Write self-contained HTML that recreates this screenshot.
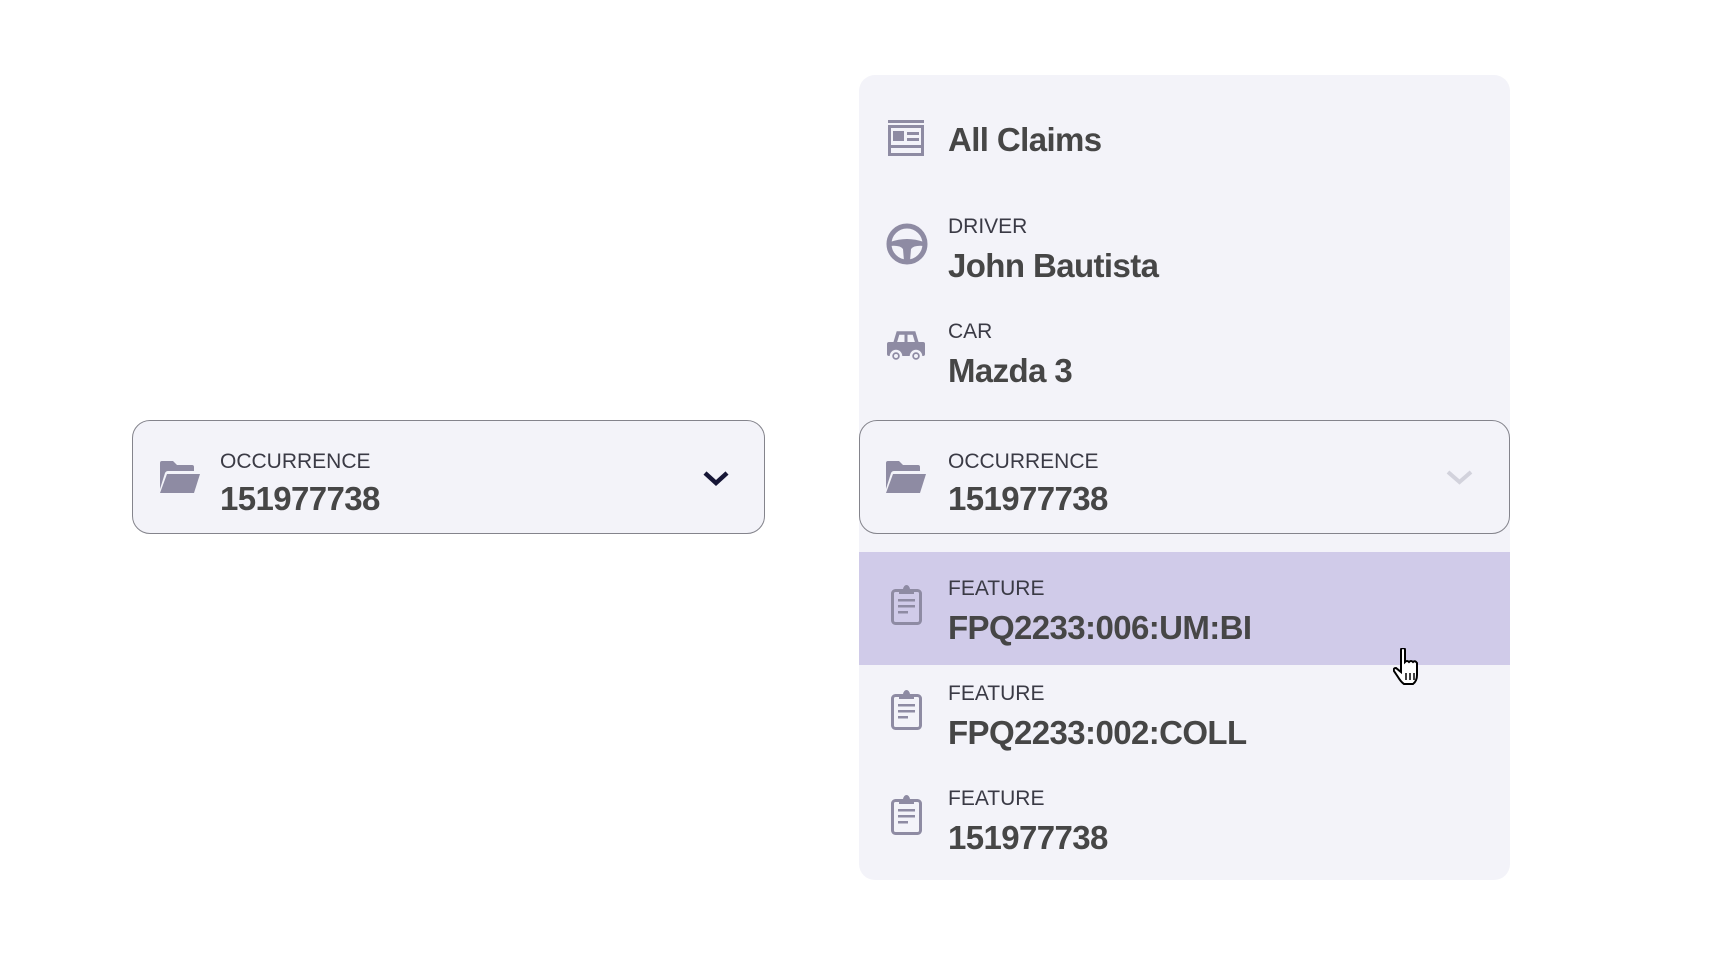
<!DOCTYPE html>
<html><head><meta charset="utf-8"><style>
*{margin:0;padding:0;box-sizing:border-box}
body{width:1730px;height:962px;background:#fff;position:relative;overflow:hidden;font-family:"Liberation Sans",sans-serif;color:#444}
.a{position:absolute}
.lbl{position:absolute;font-size:21px;line-height:21px;color:#3a3a45;font-weight:400}
.val{position:absolute;font-size:33px;line-height:33px;font-weight:700;color:#464646;letter-spacing:-0.6px}
.box{position:absolute;border:1.5px solid #84848c;border-radius:18px;background:#f3f3f9}
</style></head><body>

<div class="box" style="left:132px;top:420px;width:633px;height:114px"></div>
<svg class="a" style="left:160px;top:461px" width="40" height="32" viewBox="0 0 40 32"><path d="M0 2 Q0 0 2 0 H13 L17 4 H32 Q34 4 34 6 V10 H8 Q6 10 5 12 L0 28 Z" fill="#8e8ba3"/><path d="M7 13 H40 L34 32 H0 Z" fill="#8e8ba3"/></svg>
<div class="lbl" style="left:220px;top:451px">OCCURRENCE</div>
<div class="val" style="left:220px;top:482px">151977738</div>
<svg class="a" style="left:702px;top:470px" width="28" height="17" viewBox="0 0 28 17"><path d="M3 3 L14 13 L25 3" fill="none" stroke="#161636" stroke-width="4.5"/></svg>

<div class="a" style="left:859px;top:75px;width:651px;height:805px;background:#f3f3f9;border-radius:16px"></div>

<svg class="a" style="left:888px;top:120px" width="36" height="36" viewBox="0 0 36 36"><rect x="0" y="0" width="36" height="3" fill="#8e8ba3"/><rect x="1.5" y="6.5" width="33" height="28" fill="none" stroke="#8e8ba3" stroke-width="3"/><rect x="5" y="11" width="11" height="10" fill="#8e8ba3"/><rect x="19" y="12" width="12" height="3" fill="#8e8ba3"/><rect x="19" y="18" width="12" height="3" fill="#8e8ba3"/><rect x="3" y="25" width="30" height="3" fill="#8e8ba3"/></svg>
<div class="val" style="left:948px;top:123px">All Claims</div>

<svg class="a" style="left:886px;top:223px" width="42" height="42" viewBox="0 0 42 42"><circle cx="21" cy="21" r="18" fill="none" stroke="#8e8ba3" stroke-width="5"/><path d="M4 19 Q21 13 38 19 L38 23 Q28 22 25 26 L24 38 H18 L17 26 Q14 22 4 23 Z" fill="#8e8ba3"/></svg>
<div class="lbl" style="left:948px;top:216px">DRIVER</div>
<div class="val" style="left:948px;top:249px">John Bautista</div>

<svg class="a" style="left:887px;top:331px" width="38" height="32" viewBox="0 0 38 32"><path d="M8 12 L11 2 H27 L30 12" fill="none" stroke="#8e8ba3" stroke-width="3.5"/><rect x="17.5" y="2" width="3" height="10" fill="#8e8ba3"/><rect x="0" y="11" width="38" height="14" rx="2" fill="#8e8ba3"/><circle cx="9" cy="25" r="5" fill="#8e8ba3" stroke="#f3f3f9" stroke-width="2.5"/><circle cx="29" cy="25" r="5" fill="#8e8ba3" stroke="#f3f3f9" stroke-width="2.5"/><circle cx="9" cy="25" r="2" fill="#f3f3f9"/><circle cx="29" cy="25" r="2" fill="#f3f3f9"/></svg>
<div class="lbl" style="left:948px;top:321px">CAR</div>
<div class="val" style="left:948px;top:354px">Mazda 3</div>

<div class="box" style="left:859px;top:420px;width:651px;height:114px"></div>
<svg class="a" style="left:886px;top:461px" width="40" height="32" viewBox="0 0 40 32"><path d="M0 2 Q0 0 2 0 H13 L17 4 H32 Q34 4 34 6 V10 H8 Q6 10 5 12 L0 28 Z" fill="#8e8ba3"/><path d="M7 13 H40 L34 32 H0 Z" fill="#8e8ba3"/></svg>
<div class="lbl" style="left:948px;top:451px">OCCURRENCE</div>
<div class="val" style="left:948px;top:482px">151977738</div>
<svg class="a" style="left:1445px;top:469px" width="29" height="17" viewBox="0 0 29 17"><path d="M3 3 L14.5 13 L26 3" fill="none" stroke="#d2d2dc" stroke-width="4"/></svg>

<div class="a" style="left:859px;top:552px;width:651px;height:113px;background:#d0cbe9"></div>

<svg class="a" style="left:891px;top:585px" width="31" height="40" viewBox="0 0 31 40"><rect x="1.5" y="5.5" width="28" height="33" rx="3" fill="none" stroke="#8e8ba3" stroke-width="3"/><path d="M8 4 H12 Q13 0 15.5 0 Q18 0 19 4 H23 V9 H8 Z" fill="#8e8ba3"/><rect x="7" y="14" width="17" height="2.5" fill="#8e8ba3"/><rect x="7" y="20" width="17" height="2.5" fill="#8e8ba3"/><rect x="7" y="26" width="10" height="2.5" fill="#8e8ba3"/></svg>
<div class="lbl" style="left:948px;top:578px">FEATURE</div>
<div class="val" style="left:948px;top:611px">FPQ2233:006:UM:BI</div>

<svg class="a" style="left:891px;top:690px" width="31" height="40" viewBox="0 0 31 40"><rect x="1.5" y="5.5" width="28" height="33" rx="3" fill="none" stroke="#8e8ba3" stroke-width="3"/><path d="M8 4 H12 Q13 0 15.5 0 Q18 0 19 4 H23 V9 H8 Z" fill="#8e8ba3"/><rect x="7" y="14" width="17" height="2.5" fill="#8e8ba3"/><rect x="7" y="20" width="17" height="2.5" fill="#8e8ba3"/><rect x="7" y="26" width="10" height="2.5" fill="#8e8ba3"/></svg>
<div class="lbl" style="left:948px;top:683px">FEATURE</div>
<div class="val" style="left:948px;top:716px">FPQ2233:002:COLL</div>

<svg class="a" style="left:891px;top:795px" width="31" height="40" viewBox="0 0 31 40"><rect x="1.5" y="5.5" width="28" height="33" rx="3" fill="none" stroke="#8e8ba3" stroke-width="3"/><path d="M8 4 H12 Q13 0 15.5 0 Q18 0 19 4 H23 V9 H8 Z" fill="#8e8ba3"/><rect x="7" y="14" width="17" height="2.5" fill="#8e8ba3"/><rect x="7" y="20" width="17" height="2.5" fill="#8e8ba3"/><rect x="7" y="26" width="10" height="2.5" fill="#8e8ba3"/></svg>
<div class="lbl" style="left:948px;top:788px">FEATURE</div>
<div class="val" style="left:948px;top:821px">151977738</div>

<svg class="a" style="left:1393px;top:648px" width="30" height="38" viewBox="0 0 30 38"><path d="M8 2 Q8 0 10 0 Q12 0 12 2 V14 Q14 12 16 14 Q18 12 20 14 Q22 12 24 15 V27 Q24 33 20 36 H11 Q8 34 5 29 L1 23 Q0 20 3 20 L8 24 Z" fill="#fff" stroke="#000" stroke-width="2"/><path d="M13 25 V32 M17 25 V32 M21 25 V32" stroke="#000" stroke-width="1.5"/></svg>
</body></html>
